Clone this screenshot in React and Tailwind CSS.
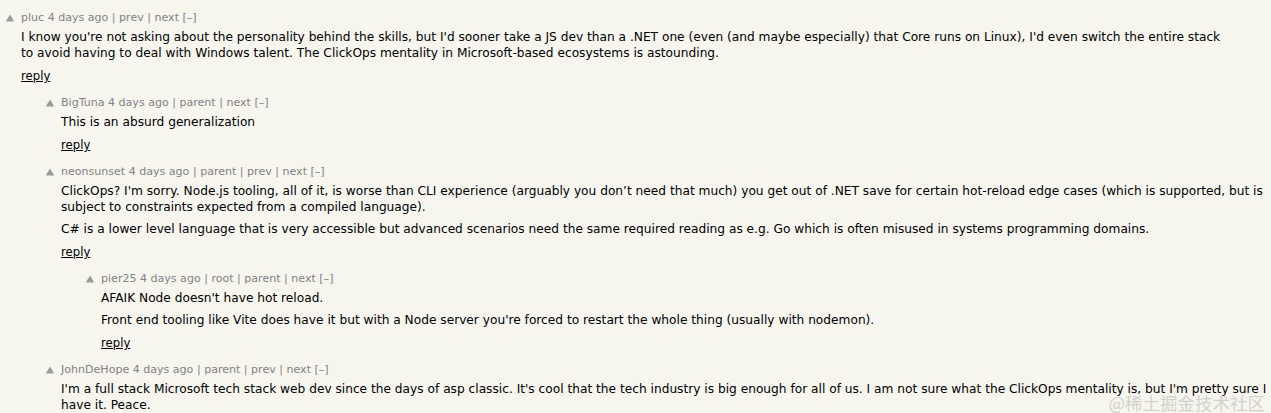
import React from 'react';

const comments = [
  {
    level: 0,
    user: 'pluc',
    links: ['prev', 'next'],
    paras: [
      [
        "I know you're not asking about the personality behind the skills, but I'd sooner take a JS dev than a .NET one (even (and maybe especially) that Core runs on Linux), I'd even switch the entire stack",
        'to avoid having to deal with Windows talent. The ClickOps mentality in Microsoft-based ecosystems is astounding.',
      ],
    ],
  },
  {
    level: 1,
    user: 'BigTuna',
    links: ['parent', 'next'],
    paras: [['This is an absurd generalization']],
  },
  {
    level: 1,
    user: 'neonsunset',
    links: ['parent', 'prev', 'next'],
    paras: [
      [
        "ClickOps? I'm sorry. Node.js tooling, all of it, is worse than CLI experience (arguably you don\u2019t need that much) you get out of .NET save for certain hot-reload edge cases (which is supported, but is",
        'subject to constraints expected from a compiled language).',
      ],
      ['C# is a lower level language that is very accessible but advanced scenarios need the same required reading as e.g. Go which is often misused in systems programming domains.'],
    ],
  },
  {
    level: 2,
    user: 'pier25',
    links: ['root', 'parent', 'next'],
    paras: [
      ["AFAIK Node doesn't have hot reload."],
      ["Front end tooling like Vite does have it but with a Node server you're forced to restart the whole thing (usually with nodemon)."],
    ],
  },
  {
    level: 1,
    user: 'JohnDeHope',
    links: ['parent', 'prev', 'next'],
    paras: [
      [
        "I'm a full stack Microsoft tech stack web dev since the days of asp classic. It's cool that the tech industry is big enough for all of us. I am not sure what the ClickOps mentality is, but I'm pretty sure I",
        'have it. Peace.',
      ],
    ],
    last: true,
  },
];

const indents = ['pl-0', 'pl-[40px]', 'pl-[80px]'];

function Arrow() {
  return (
    <svg width="10" height="10" viewBox="0 0 10 10" className="shrink-0">
      <polygon points="5,1.5 9.2,8.5 0.8,8.5" fill="#9a9a9a" />
    </svg>
  );
}

function Comment({ c }) {
  return (
    <div className={`flex ${indents[c.level]} ${c.last ? '' : 'mb-[12px]'}`}>
      <div className="w-[21px] flex justify-center pt-[2px] pr-[1px]">
        <Arrow />
      </div>
      <div className="flex-1 min-w-0">
        <div className="text-[11.05px] leading-[14px] text-[#828282] whitespace-nowrap">
          {c.user} 4 days ago
          {c.links.map((l) => (
            <span key={l}> | {l}</span>
          ))}{' '}
          [–]
        </div>
        <div className="mt-[4px] text-[12.2px] leading-[16px] text-black">
          {c.paras.map((p, i) => (
            <div key={i} className={i > 0 ? 'mt-[6px]' : ''}>
              {p.map((line, j) => (
                <div key={j} className="whitespace-nowrap">{line}</div>
              ))}
            </div>
          ))}
        </div>
        {!c.last && (
          <div className="mt-[7px] text-[11.7px] leading-[16px] text-black">
            <span className="underline">reply</span>
          </div>
        )}
      </div>
    </div>
  );
}

export default function App() {
  return (
    <div
      className="relative w-[1271px] h-[413px] overflow-hidden bg-[#f6f6ef] pt-[11px]"
      style={{ fontFamily: '"DejaVu Sans", Verdana, sans-serif' }}
    >
      {comments.map((c) => (
        <Comment key={c.user} c={c} />
      ))}
      <div
        className="absolute right-[6px] bottom-[-1px] text-[17.5px] leading-[22px] text-[#d2d2cc]"
        style={{ fontFamily: '"Noto Sans CJK SC", sans-serif' }}
      >
        @稀土掘金技术社区
      </div>
    </div>
  );
}
